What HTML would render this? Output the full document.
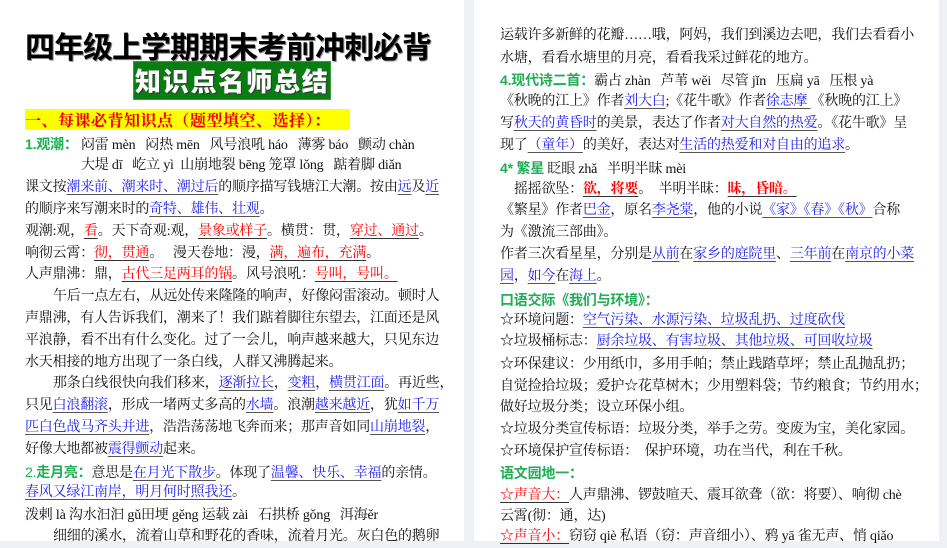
<!DOCTYPE html>
<html><head><meta charset="utf-8"><style>
*{margin:0;padding:0;box-sizing:border-box}
body{width:947px;height:541px;overflow:hidden;background:#eef0f5;position:relative;font-family:"Liberation Serif","Noto Serif CJK SC",serif;color:#111}
.pg{position:absolute;top:0;height:541px;background:#fff}
.l{position:absolute;white-space:nowrap;font-size:14px;line-height:22px;letter-spacing:-0.2px}
.b{color:#2222ee;text-decoration:underline;text-decoration-color:#555;text-underline-offset:3px}
.r{color:#f00;text-decoration:underline;text-decoration-color:#333;text-underline-offset:3px}
.g{color:#1fae55;font-weight:bold;font-family:"Liberation Sans","Noto Sans CJK SC",sans-serif}
.rb{color:#f00;font-weight:bold}
</style></head><body>
<div class="pg" style="left:0;width:464px"></div>
<div class="pg" style="left:474px;width:465px"></div>

<div style="position:absolute;left:25px;top:28px;font:bold 30px/34px 'Noto Sans CJK SC',sans-serif;letter-spacing:-1px;color:#000;text-shadow:1px 1px 0 #888">四年级上学期期末考前冲刺必背</div>
<div style="position:absolute;left:133px;top:61px;width:198px;height:39px;background:#0a7d12;border:1px solid #3a9a3a"></div>
<div style="position:absolute;left:135px;top:64px;font:900 26px/34px 'Noto Sans CJK SC',sans-serif;letter-spacing:1.8px;color:#fff;text-shadow:1px 1px 0 #333">知识点名师总结</div>
<div style="position:absolute;left:25px;top:109px;width:325px;height:21px;background:#ffff00"></div>
<div style="position:absolute;left:25px;top:109px;font:bold 16px/21px 'Noto Serif CJK SC',serif;letter-spacing:0.5px;color:#e00">一、每课必背知识点（题型填空、选择）：</div>

<div class="l" style="left:25px;top:133px"><span class="g">1.观潮：</span> 闷雷 mèn &nbsp; 闷热 mēn &nbsp; 风号浪吼 háo &nbsp; 薄雾 báo &nbsp; 颤动 chàn</div>
<div class="l" style="left:81px;top:155px">大堤 dī &nbsp; 屹立 yì &nbsp;山崩地裂 bēng 笼罩 lǒng &nbsp; 踮着脚 diǎn</div>
<div class="l" style="left:25px;top:177px">课文按<span class="b">潮来前、潮来时、潮过后</span>的顺序描写钱塘江大潮。按由<span class="b">远</span>及<span class="b">近</span></div>
<div class="l" style="left:25px;top:199px">的顺序来写潮来时的<span class="b">奇特、雄伟、壮观</span>。</div>
<div class="l" style="left:25px;top:221px">观潮:观，<span class="r">看</span>。天下奇观:观，<span class="r">景象或样子</span>。横贯：贯，<span class="r">穿过、通过</span>。</div>
<div class="l" style="left:25px;top:243px">响彻云霄：<span class="r">彻，贯通</span>。 &nbsp; 漫天卷地：漫，<span class="r">满，遍布，充满</span>。</div>
<div class="l" style="left:25px;top:264px">人声鼎沸：鼎，<span class="r">古代三足两耳的锅</span>。风号浪吼：<span class="r">号叫，号叫。 </span></div>
<div class="l" style="left:53px;top:286px">午后一点左右，从远处传来隆隆的响声，好像闷雷滚动。顿时人</div>
<div class="l" style="left:25px;top:308px">声鼎沸，有人告诉我们，潮来了！我们踮着脚往东望去，江面还是风</div>
<div class="l" style="left:25px;top:330px">平浪静，看不出有什么变化。过了一会儿，响声越来越大，只见东边</div>
<div class="l" style="left:25px;top:352px">水天相接的地方出现了一条白线，人群又沸腾起来。</div>
<div class="l" style="left:53px;top:373px">那条白线很快向我们移来，<span class="b">逐渐拉长</span>，<span class="b">变粗</span>，<span class="b">横贯江面</span>。再近些，</div>
<div class="l" style="left:25px;top:395px">只见<span class="b">白浪翻滚</span>，形成一堵两丈多高的<span class="b">水墙</span>。浪潮<span class="b">越来越近</span>，犹<span class="b">如千万</span></div>
<div class="l" style="left:25px;top:417px"><span class="b">匹白色战马齐头并进</span>，浩浩荡荡地飞奔而来；那声音如同<span class="b">山崩地裂</span>，</div>
<div class="l" style="left:25px;top:439px">好像大地都被<span class="b">震得颤动</span>起来。</div>
<div class="l" style="left:25px;top:461px"><span class="g" style="font-weight:normal">2.</span><span class="g">走月亮：</span>意思是<span class="b">在月光下散步</span>。体现了<span class="b">温馨、快乐、幸福</span>的亲情。</div>
<div class="l" style="left:25px;top:482px"><span class="b">春风又绿江南岸，明月何时照我还</span>。</div>
<div class="l" style="left:25px;top:505px">泼剌 là 沟水汩汩 gǔ田埂 gěng 运载 zài &nbsp; 石拱桥 gǒng &nbsp; 洱海ěr</div>
<div class="l" style="left:53px;top:526px">细细的溪水，流着山草和野花的香味，流着月光。灰白色的鹅卵</div>

<div class="l" style="left:500px;top:25px">运载许多新鲜的花瓣……哦，阿妈，我们到溪边去吧，我们去看看小</div>
<div class="l" style="left:500px;top:48px">水塘，看看水塘里的月亮，看看我采过鲜花的地方。</div>
<div class="l" style="left:500px;top:69px"><span class="g">4.现代诗二首：</span>霸占 zhàn &nbsp; 芦苇 wěi &nbsp; 尽管 jǐn &nbsp; 压扁 yā &nbsp; 压根 yà</div>
<div class="l" style="left:500px;top:91px">《秋晚的江上》作者<span class="b">刘大白</span>;《花牛歌》作者<span class="b">徐志摩 </span> 《秋晚的江上》</div>
<div class="l" style="left:500px;top:113px">写<span class="b">秋天的黄昏时</span>的美景，表达了作者<span class="b">对大自然的热爱</span>。《花牛歌》呈</div>
<div class="l" style="left:500px;top:135px">现了<span class="b">（童年）</span>的美好，表达对<span class="b">生活的热爱和对自由的追求</span>。</div>
<div class="l" style="left:500px;top:157px"><span class="g">4* 繁星</span> 眨眼 zhǎ &nbsp; 半明半昧 mèi</div>
<div class="l" style="left:514px;top:179px">摇摇欲坠：<span class="r rb">欲，将要</span>。 &nbsp;半明半昧：<span class="r rb">昧，昏暗。 </span></div>
<div class="l" style="left:500px;top:200px">《繁星》作者<span class="b">巴金</span>，原名<span class="b">李尧棠</span>，他的小说<span class="b">《家》《春》《秋》</span>合称</div>
<div class="l" style="left:500px;top:222px">为《激流三部曲》。</div>
<div class="l" style="left:500px;top:244px">作者三次看星星，分别是<span class="b">从前</span>在<span class="b">家乡的庭院里</span>、<span class="b">三年前</span>在<span class="b">南京的小菜</span></div>
<div class="l" style="left:500px;top:266px"><span class="b">园</span>，<span class="b">如今</span>在<span class="b">海上</span>。</div>
<div class="l" style="left:500px;top:289px"><span class="g">口语交际《我们与环境》：</span></div>
<div class="l" style="left:500px;top:310px">☆环境问题：<span class="b">空气污染、水源污染、垃圾乱扔、过度砍伐</span></div>
<div class="l" style="left:500px;top:331px">☆垃圾桶标志：<span class="b">厨余垃圾、有害垃圾、其他垃圾、可回收垃圾</span></div>
<div class="l" style="left:500px;top:354px">☆环保建议：少用纸巾，多用手帕；禁止践踏草坪；禁止乱抛乱扔；</div>
<div class="l" style="left:500px;top:376px">自觉捡拾垃圾；爱护☆花草树木；少用塑料袋；节约粮食；节约用水；</div>
<div class="l" style="left:500px;top:397px">做好垃圾分类；设立环保小组。</div>
<div class="l" style="left:500px;top:419px">☆垃圾分类宣传标语：垃圾分类，举手之劳。变废为宝，美化家园。</div>
<div class="l" style="left:500px;top:441px">☆环境保护宣传标语： &nbsp;保护环境，功在当代，利在千秋。</div>
<div class="l" style="left:500px;top:462px"><span class="g">语文园地一：</span></div>
<div class="l" style="left:500px;top:485px"><span class="r">☆声音大：</span>人声鼎沸、锣鼓喧天、震耳欲聋（欲：将要）、响彻 chè</div>
<div class="l" style="left:500px;top:506px">云霄(彻：通，达)</div>
<div class="l" style="left:500px;top:526px"><span class="r">☆声音小：</span>窃窃 qiè 私语（窃：声音细小）、鸦 yā 雀无声、悄 qiǎo</div>
</body></html>
